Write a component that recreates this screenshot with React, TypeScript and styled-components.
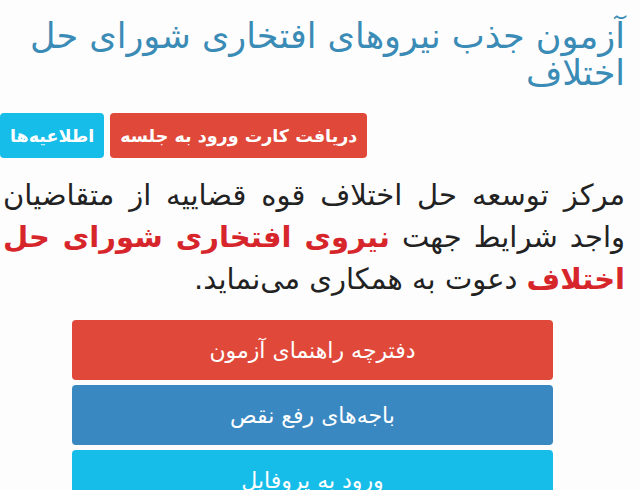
import styled, { createGlobalStyle } from 'styled-components';

const GlobalStyle = createGlobalStyle`
  html, body {
    margin: 0;
    padding: 0;
    background: #fdfdfd;
    overflow: hidden;
  }
  body {
    font-family: "DejaVu Sans", "Noto Sans", sans-serif;
  }
`;

const Page = styled.div`
  direction: rtl;
  width: 640px;
  height: 490px;
  box-sizing: border-box;
  padding: 18px 15px 0 0;
  overflow: hidden;
`;

const Title = styled.h1`
  margin: 0;
  color: #3a8bb5;
  font-size: 35px;
  font-weight: normal;
  line-height: 37px;
  text-align: right;
`;

const Tags = styled.div`
  display: flex;
  justify-content: flex-end;
  gap: 6px;
  margin: 21px 0 0 0;
`;

const Tag = styled.span<{ $bg: string }>`
  display: inline-flex;
  align-items: center;
  height: 45px;
  padding: 0 10px;
  border-radius: 4px;
  background: ${(p) => p.$bg};
  color: #fff;
  font-size: 17.5px;
  font-weight: bold;
  white-space: nowrap;
`;

const Text = styled.p`
  margin: 16px 0 0 0;
  padding-left: 3px;
  color: #222;
  font-size: 29px;
  line-height: 42px;
  text-align: justify;
  text-align-last: right;
`;

const Strong = styled.b`
  color: #d7262b;
`;

const Links = styled.div`
  display: flex;
  flex-direction: column;
  gap: 5px;
  width: 481px;
  margin: 20px auto 0 auto;
`;

const LinkButton = styled.div<{ $bg: string }>`
  display: flex;
  align-items: center;
  justify-content: center;
  height: 60px;
  border-radius: 4px;
  background: ${(p) => p.$bg};
  color: #fff;
  font-size: 22px;
`;

export default function App() {
  return (
    <>
      <GlobalStyle />
      <Page>
        <Title>آزمون جذب نیروهای افتخاری شورای حل اختلاف</Title>
        <Tags>
          <Tag $bg="#e0483a">دریافت کارت ورود به جلسه</Tag>
          <Tag $bg="#17bde9">اطلاعیه‌ها</Tag>
        </Tags>
        <Text>
          مرکز توسعه حل اختلاف قوه قضاییه از متقاضیان واجد شرایط جهت{' '}
          <Strong>نیروی افتخاری شورای حل اختلاف</Strong> دعوت به همکاری می‌نماید.
        </Text>
        <Links>
          <LinkButton $bg="#e0483a">دفترچه راهنمای آزمون</LinkButton>
          <LinkButton $bg="#3a88c2">باجه‌های رفع نقص</LinkButton>
          <LinkButton $bg="#17bde9">ورود به پروفایل</LinkButton>
        </Links>
      </Page>
    </>
  );
}
